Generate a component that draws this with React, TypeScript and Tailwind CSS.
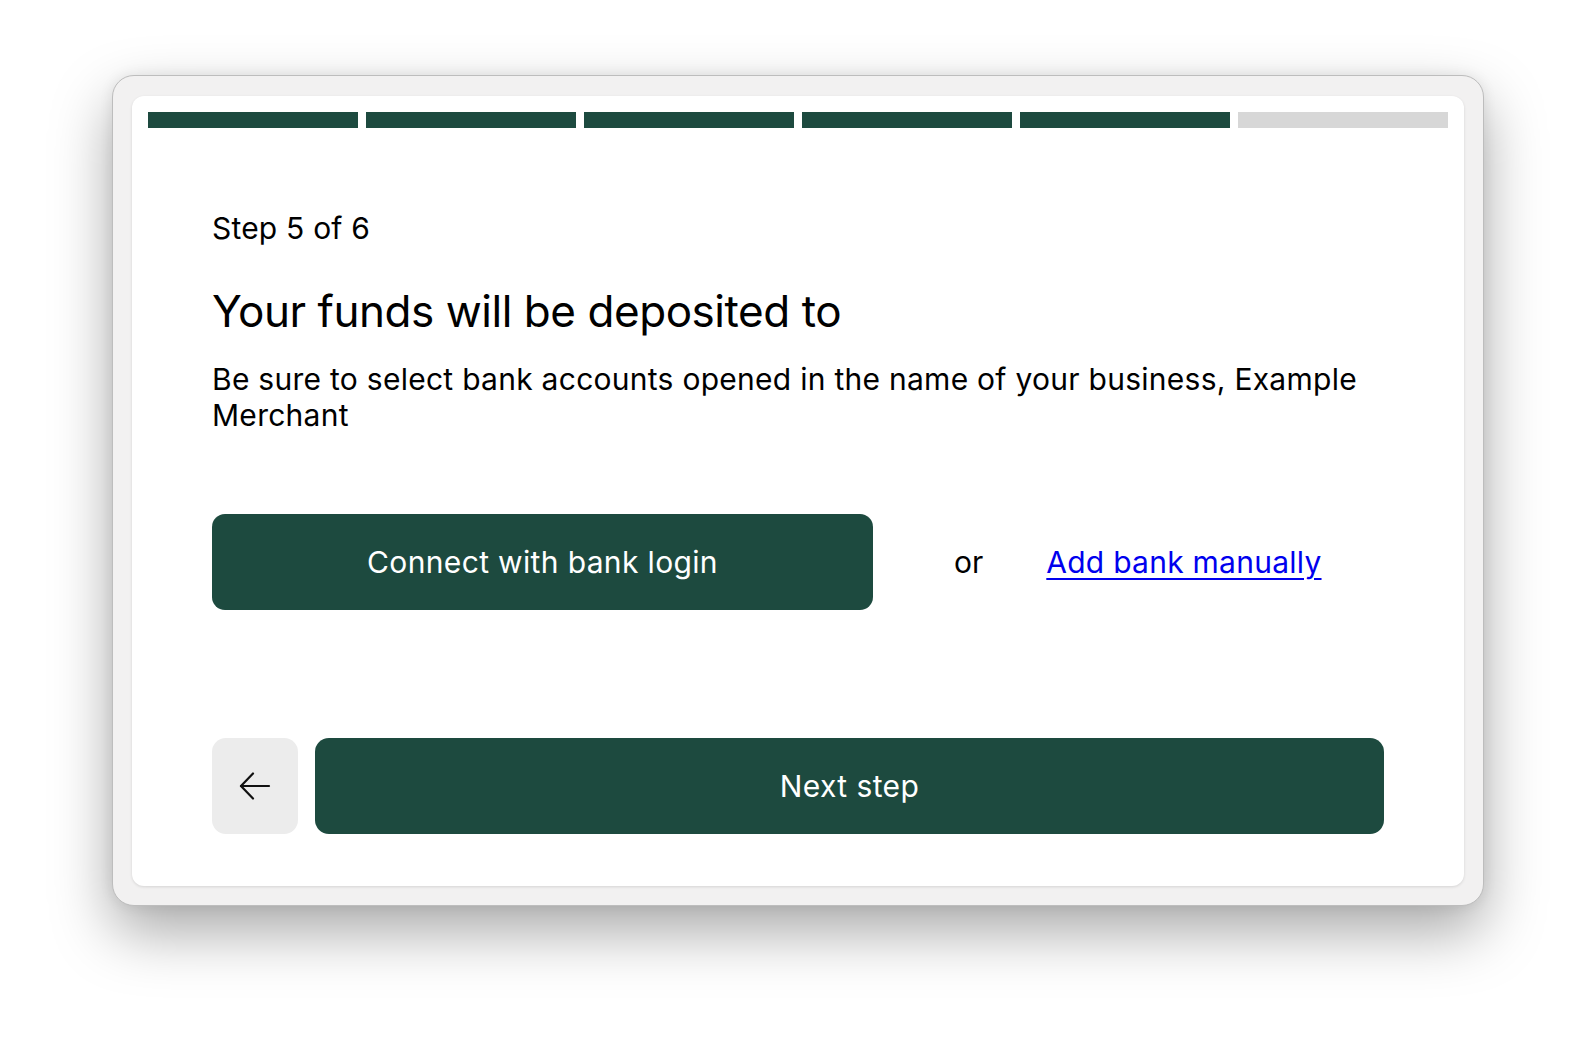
import React from "react";

const font = { fontFamily: "Inter, 'Noto Sans', 'Liberation Sans', sans-serif" };

export default function App() {
  const steps = [true, true, true, true, true, false];
  return (
    <div className="min-h-screen w-full bg-white pt-[75px] pl-[112px]" style={font}>
      <div className="w-[1372px] rounded-[22px] border border-[#bdbdbd] bg-[#f2f1f1] px-[19px] pt-[20px] pb-[19px] shadow-[0_26px_60px_rgba(0,0,0,0.34),0_0_14px_rgba(0,0,0,0.08)]">
        <div className="rounded-[12px] bg-white px-[16px] pt-[16px] pb-[52px] shadow-[0_1px_3px_rgba(0,0,0,0.12)]">
          <div className="flex gap-[8px]">
            {steps.map((done, i) => (
              <div
                key={i}
                className={done ? "h-[16px] flex-1 bg-[#1d4a3f]" : "h-[16px] flex-1 bg-[#d7d7d7]"}
              />
            ))}
          </div>
          <div className="px-[64px] pt-[82px] text-black">
            <div className="text-[30px] leading-[36px] tracking-[0.2px]">Step 5 of 6</div>
            <h1 className="mt-[39px] text-[44px] leading-[52px] font-normal tracking-[-0.45px]">Your funds will be deposited to</h1>
            <p className="mt-[24px] text-[30px] leading-[36px] tracking-[0.27px]">
              Be sure to select bank accounts opened in the name of your business, Example Merchant
            </p>
            <div className="mt-[81px] flex items-center">
              <button className="flex h-[96px] w-[661px] items-center justify-center rounded-[13px] bg-[#1d4a3f] text-[30px] tracking-[0.35px] text-white">
                Connect with bank login
              </button>
              <span className="ml-[81px] text-[30px]">or</span>
              <a href="#" className="ml-[63px] text-[30px] tracking-[0.25px] text-[#0000ee] underline decoration-[2px] underline-offset-[5px]">
                Add bank manually
              </a>
            </div>
            <div className="mt-[128px] flex gap-[17px]">
              <button className="flex h-[96px] w-[86px] items-center justify-center rounded-[14px] bg-[#ececec]">
                <svg width="32" height="28" viewBox="0 0 32 28" fill="none" stroke="#111" strokeWidth="2.2" strokeLinecap="round" strokeLinejoin="round">
                  <path d="M30 14H2" />
                  <path d="M14 1.5L2 14l12 12.5" />
                </svg>
              </button>
              <button className="flex h-[96px] flex-1 items-center justify-center rounded-[14px] bg-[#1d4a3f] text-[30px] tracking-[0.4px] text-white">
                Next step
              </button>
            </div>
          </div>
        </div>
      </div>
    </div>
  );
}
